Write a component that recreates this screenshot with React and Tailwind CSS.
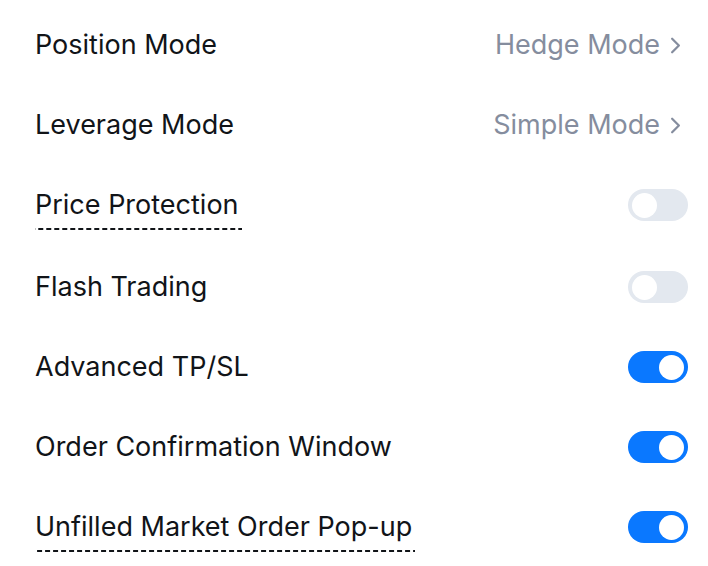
import { ChevronRight } from "lucide-react";

const rows = [
  { label: "Position Mode", value: "Hedge Mode" },
  { label: "Leverage Mode", value: "Simple Mode" },
  { label: "Price Protection", toggle: false, dashed: true },
  { label: "Flash Trading", toggle: false },
  { label: "Advanced TP/SL", toggle: true },
  { label: "Order Confirmation Window", toggle: true },
  { label: "Unfilled Market Order Pop-up", toggle: true, dashed: true },
];

function Toggle({ on }) {
  return (
    <div
      className={`flex h-8 w-[60px] items-center rounded-full px-[4px] ${
        on ? "justify-end bg-[#0a78ff]" : "justify-start bg-[#e3e8ef]"
      }`}
    >
      <div className="h-[25px] w-[25px] rounded-full bg-white" />
    </div>
  );
}

export default function App() {
  return (
    <div className="min-h-screen bg-white pt-[5px] font-['Inter',sans-serif]">
      {rows.map((r, i) => (
        <div
          key={r.label}
          className={`flex h-20 items-center justify-between pl-[35px] pr-[20px] ${i === 3 ? "mt-[2px]" : ""}`}
        >
          <span
            className={`text-[27px] leading-8 text-[#111418] ${
              r.dashed
                ? "bg-[linear-gradient(to_right,#111418_62%,transparent_0)] bg-[length:8px_2px] bg-bottom bg-repeat-x pb-[9px] -mb-[9px] pr-[3px]"
                : ""
            }`}
          >
            {r.label}
          </span>
          {r.value ? (
            <span className="flex items-center gap-[2px] text-[27px] text-[#858d9e]">
              {r.value}
              <ChevronRight size={27} strokeWidth={2} className="mr-[-1px]" />
            </span>
          ) : (
            <Toggle on={r.toggle} />
          )}
        </div>
      ))}
    </div>
  );
}
